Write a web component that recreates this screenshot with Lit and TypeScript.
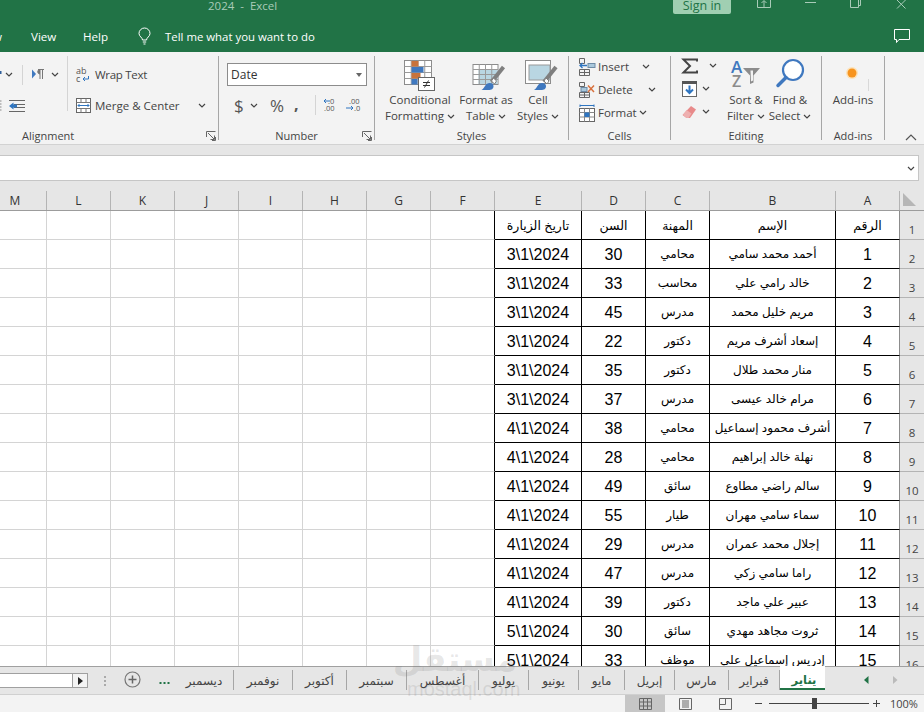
import {LitElement, html, css, svg} from 'lit';
import {customElement} from 'lit/decorators.js';

const COLS = ['M', 'L', 'K', 'J', 'I', 'H', 'G', 'F', 'E', 'D', 'C', 'B', 'A'];
const COL_WIDTHS = [47, 64, 64, 64, 64, 64, 64, 64, 87, 64, 64, 126, 64];

// each row: name, job, age, day
const PEOPLE: [string, string, number, number][] = [
    ['أحمد محمد سامي', 'محامي', 30, 3],
    ['خالد رامي علي', 'محاسب', 33, 3],
    ['مريم خليل محمد', 'مدرس', 45, 3],
    ['إسعاد أشرف مريم', 'دكتور', 22, 3],
    ['منار محمد طلال', 'دكتور', 35, 3],
    ['مرام خالد عيسى', 'مدرس', 37, 3],
    ['أشرف محمود إسماعيل', 'محامي', 38, 4],
    ['نهلة خالد إبراهيم', 'محامي', 28, 4],
    ['سالم راضي مطاوع', 'سائق', 49, 4],
    ['سماء سامي مهران', 'طيار', 55, 4],
    ['إجلال محمد عمران', 'مدرس', 29, 4],
    ['راما سامي زكي', 'مدرس', 47, 4],
    ['عبير علي ماجد', 'دكتور', 39, 4],
    ['ثروت مجاهد مهدي', 'سائق', 30, 5],
    ['إدريس إسماعيل علي', 'موظف', 33, 5],
];

const TABS: [string, number][] = [
    ['ديسمبر', 59],
    ['نوفمبر', 59],
    ['أكتوبر', 54],
    ['سبتمبر', 60],
    ['أغسطس', 72],
    ['يوليو', 50],
    ['يونيو', 50],
    ['مايو', 46],
    ['إبريل', 50],
    ['مارس', 54],
    ['فبراير', 51],
];

const caret = () => html`<svg class="caret" width="8" height="5" viewBox="0 0 8 5"><polyline points="1,1 4,4 7,1" fill="none" stroke="#444" stroke-width="1.2"/></svg>`;

const launcher = () => html`<svg width="10" height="10" viewBox="0 0 10 10"><path d="M.5 6V.5H9.5M2 2l6 6M8.5 4.5V8.5H4.5" fill="none" stroke="#666"/><path d="M9.5 6V9.5H6" fill="none" stroke="#666"/></svg>`;

// table grid outline used by the ribbon's big buttons
const gridLines = (x: number, y: number, w: number, h: number, cols: number, rows: number) => {
    const out = [];
    for (let i = 1; i < cols; i++) {
        const cx = x + (w * i) / cols;
        out.push(svg`<line x1=${cx} y1=${y} x2=${cx} y2=${y + h} stroke="#9a9a9a"/>`);
    }
    for (let i = 1; i < rows; i++) {
        const cy = y + (h * i) / rows;
        out.push(svg`<line x1=${x} y1=${cy} x2=${x + w} y2=${cy} stroke="#9a9a9a"/>`);
    }
    return out;
};

const brush = () => svg`
    <path d="M31 5L19 20" stroke="#7f7f7f" stroke-width="4"/>
    <path d="M21 16l3 3 -2 3 -3 -3z" fill="#fff" stroke="#7f7f7f"/>
    <path d="M9 28c2-1 3-4 5-6 3-2 7-1 7 2 0 3-2 4-5 4z" fill="#3f78bf"/>`;

@customElement('app-root')
export class AppRoot extends LitElement {
    static styles = css`
        :host {
            display: block;
            position: relative;
            width: 924px;
            height: 712px;
            overflow: hidden;
            font-family: "Open Sans", "DejaVu Sans", sans-serif;
            font-size: 11.5px;
            color: #444;
            background: #f3f3f3;
        }
        .page { display: flex; flex-direction: column; height: 712px; }
        svg { display: block; flex: none; overflow: visible; }

        /* green title area */
        .top { height: 52px; background: #217346; flex: none; }
        .titlebar { display: flex; height: 25px; color: #a9cbb8; line-height: 11px; }
        .title { margin-left: 208px; width: 465px; font-size: 11.5px; white-space: pre; }
        .signin {
            width: 58px; height: 14px; background: #a0cfb2; color: #217346;
            text-align: center; font-size: 12.5px; border-radius: 0 0 2px 2px; overflow: hidden;
        }
        .win-a { margin-left: 26px; }
        .win-b { margin-left: 34px; }
        .win-c { margin-left: 34px; }
        .win-d { margin-left: 35px; }
        .menubar {
            display: flex; align-items: center; height: 27px; padding-bottom: 4px; box-sizing: border-box;
            color: #fff; font-size: 11.6px;
        }
        .m-r { margin-left: -36px; width: 67px; }
        .m-view { width: 52px; }
        .m-help { width: 55px; }
        .m-tell { margin-left: 14px; flex: 1; font-size: 11.4px; }
        .m-comment { margin-right: 14px; }

        /* ribbon */
        .ribbon {
            display: flex; height: 93px; padding-top: 4px; box-sizing: border-box; flex: none;
            background: #f3f3f3; border-bottom: 1px solid #d2d2d2; position: relative;
        }
        .group {
            height: 84px; box-sizing: border-box; border-right: 1px solid #a6a6a6;
            display: flex; flex-direction: column;
        }
        .g-align { width: 219px; }
        .g-number { width: 156px; }
        .g-styles { width: 194px; }
        .g-cells { width: 102px; }
        .g-editing { width: 151px; }
        .g-addins { width: 63px; }
        .body { height: 72px; display: flex; }
        .glabel {
            height: 12px; line-height: 16px; text-align: center; position: relative;
            font-size: 11px; color: #444;
        }
        .glabel svg { position: absolute; right: 2px; top: 3px; }
        .g-align .glabel { text-align: left; padding-left: 22px; }
        .collapse { position: absolute; right: 7px; top: 82px; }

        .row { display: flex; align-items: center; height: 31px; white-space: nowrap; }
        .a-left { width: 68px; height: 55px; padding-top: 6px; border-right: 1px solid #d4d4d4; box-sizing: border-box; }
        .a-left .row { height: 25px; }
        .a-left .row + .row { margin-top: 6px; }
        .a-right { padding-top: 3px; }
        .a-right .row { padding-left: 8px; gap: 4px; }
        .wrap-txt { letter-spacing: -0.3px; }
        .vsep { width: 1px; height: 20px; background: #d4d4d4; }
        .a-sep { margin-left: 9px; margin-right: 9px; }
        .a-c2 { margin-left: 6px; }
        .a-merge { margin-left: 14px; }

        .n-col { padding: 7px 0 0 8px; }
        .combo {
            width: 140px; height: 23px; box-sizing: border-box; background: #fff;
            border: 1px solid #8c8c8c; display: flex; align-items: center; justify-content: space-between;
            padding: 0 4px 0 3px; color: #333; font-size: 12px;
        }
        .combo i { width: 0; height: 0; border: 3px solid transparent; border-top: 4px solid #666; border-bottom: 0; }
        .n-row { height: 38px; align-items: center; display: flex; padding-left: 7px; }
        .n-dollar { font-size: 17px; color: #555; width: 16px; }
        .n-pct { font-size: 17px; color: #555; margin-left: 12px; width: 24px; font-weight: 400; }
        .n-comma { font-size: 16px; font-weight: 700; color: #555; width: 17px; margin-top: -3px; }
        .n-sep { margin-left: 4px; margin-right: 7px; }
        .n-inc { margin-right: 8px; }

        .big {
            display: flex; flex-direction: column; align-items: center; text-align: center;
            line-height: 16px; white-space: nowrap; font-size: 11.5px;
        }
        .big .ico { height: 36px; display: flex; align-items: flex-end; }
        .big .cl { display: flex; align-items: center; gap: 3px; height: 16px; }
        .s-cf { width: 70px; margin-left: 10px; }
        .s-ft { width: 60px; margin-left: 1px; }
        .s-cs { width: 40px; margin-left: 2px; }

        .cells-col { padding: 0 0 0 10px; margin-top: -1px; }
        .cells-col .row { height: 23px; }
        .c-txt { margin-left: 3px; }
        .c-i { margin-left: 13px; }
        .c-d { margin-left: 15px; }
        .c-f { margin-left: 2px; }

        .ed-col { width: 55px; padding-left: 11px; box-sizing: border-box; margin-top: -2px; }
        .ed-col .row { height: 23px; }
        .ed-sum { margin-left: 11px; }
        .ed-fill { margin-left: 5px; }
        .ed-sort { width: 40px; }
        .ed-find { width: 44px; margin-left: 2px; }
        .add-dot { width: 100%; }

        /* formula bar */
        .formula { height: 36px; flex: none; box-sizing: border-box; background: #e6e6e6; padding-top: 10px; }
        .finput {
            height: 26px; box-sizing: border-box; width: 920px; margin-left: -1px; background: #fff;
            border: 1px solid #c6c6c6; display: flex; align-items: center; justify-content: flex-end; padding-right: 3px;
        }

        /* sheet */
        .sheet { flex: 1; min-height: 0; overflow: hidden; background: #fff; }
        table { border-collapse: separate; border-spacing: 0; table-layout: fixed; width: 924px; }
        th { height: 30px; padding: 0; background: #e6e6e6; border-bottom: 1px solid #9c9c9c; vertical-align: bottom; box-sizing: border-box; font-weight: 400; }
        .colname {
            height: 19px; line-height: 20px; border-right: 1px solid #b4b4b4; box-sizing: border-box;
            text-align: center; font-family: "Open Sans", sans-serif; font-size: 12px; color: #333;
        }
        .colname.cut { padding-right: 16px; }
        th svg { margin: 0 0 3px 3px; }
        td { height: 29px; padding: 0; box-sizing: border-box; border-right: 1px solid #d4d4d4; border-bottom: 1px solid #d4d4d4; text-align: center; white-space: nowrap; overflow: hidden; }
        td.edge { border-right-color: #000; }
        td.data { border-right-color: #000; border-bottom-color: #000; color: #000; font-family: "Liberation Sans", "DejaVu Sans", sans-serif; }
        td.last { border-right-color: #8c8c8c; }
        td.num { font-size: 16px; padding-top: 1px; }
        td.ar { font-size: 12px; }
        td.hd { font-size: 12.5px; }
        td.rh {
            background: #e6e6e6; border-right: 0; border-bottom-color: #b4b4b4; vertical-align: bottom;
            font-family: "Open Sans", sans-serif; font-size: 11.5px; color: #444; line-height: 14px; padding-bottom: 2px;
        }

        /* sheet tabs */
        .tabs {
            height: 29px; flex: none; box-sizing: border-box; background: #e6e6e6;
            border-top: 1px solid #a0a0a0; border-bottom: 1px solid #d0d0d0; display: flex; align-items: flex-start; position: relative;
        }
        .hscroll {
            width: 89px; height: 15px; margin-top: 6px; margin-left: -1px; box-sizing: border-box; flex: none;
            background: #fff; border: 1px solid #a0a0a0; display: flex; justify-content: flex-end;
        }
        .hscroll div { width: 14px; border-left: 1px solid #a0a0a0; background: #f3f3f3; display: flex; align-items: center; justify-content: center; }
        .hscroll i { width: 0; height: 0; border: 4px solid transparent; border-left: 5px solid #222; border-right: 0; }
        .grip { margin-left: 16px; margin-top: 9px; }
        .addsheet { margin-left: 17px; margin-top: 4px; }
        .dots { margin-left: 14px; margin-top: 15px; width: 20px; }
        .tab {
            height: 20px; margin-top: 3px; box-sizing: border-box; border-right: 1px solid #a6a6a6; flex: none;
            text-align: center; line-height: 22px; font-family: "DejaVu Sans", sans-serif; font-size: 12px; color: #444;
        }
        .tab.active {
            width: 45px; height: 24px; margin-top: -1px; background: #fff; border: 0; border-bottom: 2px solid #217346;
            color: #217346; font-weight: 700; line-height: 28px; font-size: 11.5px; padding-left: 3px;
        }
        .nav-a { margin-left: 39px; margin-top: 9px; }
        .nav-b { margin-left: 24px; margin-top: 9px; }

        /* status bar */
        .status { height: 17px; flex: none; background: #f3f3f3; display: flex; align-items: center; font-size: 11px; color: #444; }
        .vbtn { width: 40px; height: 17px; display: flex; align-items: center; justify-content: center; }
        .vbtn.on { background: #c6c6c6; margin-left: 625px; }
        .zoomer { margin-left: 10px; }
        .pct { margin-left: 9px; }

        .watermark {
            position: absolute; left: 407px; top: 642px; width: 110px; pointer-events: none;
            color: rgba(110, 110, 110, 0.17); font-family: "Liberation Sans", "DejaVu Sans", sans-serif; line-height: 1;
        }
        .wm-ar { font-size: 34px; font-weight: 700; white-space: nowrap; }
        .wm-en { font-size: 20px; margin-top: 3px; }
    `;

    private renderRow(n: number, cells: unknown[]) {
        const blanks = COLS.slice(0, 8).map((_, i) => html`<td class=${i === 7 ? 'edge' : ''}></td>`);
        return html`<tr>
            ${blanks}
            ${cells}
            <td class="rh">${n}</td>
        </tr>`;
    }

    private renderSheet() {
        const head = ['تاريخ الزيارة', 'السن', 'المهنة', 'الإسم', 'الرقم'];
        const headCells = head.map((t, i) => html`<td class="data hd ${i === 4 ? 'last' : ''}" dir="rtl">${t}</td>`);
        return html`<table>
            <colgroup>
                ${COL_WIDTHS.map(w => html`<col style="width:${w}px">`)}
                <col style="width:24px">
            </colgroup>
            <tr>
                ${COLS.map(c => html`<th><div class="colname ${c === 'M' ? 'cut' : ''}">${c}</div></th>`)}
                <th><svg width="14" height="14" viewBox="0 0 14 14"><path d="M0 0L13 13H0z" fill="#b6b6b6"/></svg></th>
            </tr>
            ${this.renderRow(1, headCells)}
            ${PEOPLE.map(([name, job, age, day], i) => this.renderRow(i + 2, [
                html`<td class="data num">${day}\\1\\2024</td>`,
                html`<td class="data num">${age}</td>`,
                html`<td class="data ar" dir="rtl">${job}</td>`,
                html`<td class="data ar" dir="rtl">${name}</td>`,
                html`<td class="data num last">${i + 1}</td>`,
            ]))}
        </table>`;
    }

    private renderTop() {
        const c = '#a9cbb8';
        return html`<div class="top">
            <div class="titlebar">
                <div class="title">2024  -  Excel</div>
                <div class="signin">Sign in</div>
                <svg class="win-a" width="14" height="8" viewBox="0 0 14 8"><path d="M.5 0V7.5H13.5V0M7 7V1M4.5 3L7 .5 9.5 3" fill="none" stroke=${c}/></svg>
                <svg class="win-b" width="11" height="8" viewBox="0 0 11 8"><line x1="0" y1="2.5" x2="11" y2="2.5" stroke=${c}/></svg>
                <svg class="win-c" width="11" height="8" viewBox="0 0 11 8"><path d="M.5 0V7.5H8.5V0M8.5 5.5H10.5V0" fill="none" stroke=${c}/></svg>
                <svg class="win-d" width="11" height="9" viewBox="0 0 11 9"><path d="M1 0L9.5 8.5M9.5 0L1 8.5" fill="none" stroke=${c}/></svg>
            </div>
            <div class="menubar">
                <div class="m-r">Review</div>
                <div class="m-view">View</div>
                <div class="m-help">Help</div>
                <svg width="13" height="17" viewBox="0 0 13 17"><path d="M4.5 12C4.5 9.5 1 8.5 1 5.5a5.5 5.5 0 0 1 11 0C12 8.5 8.5 9.5 8.5 12zM4.8 14H8.2M5.5 16H7.5" fill="none" stroke="#fff"/></svg>
                <div class="m-tell">Tell me what you want to do</div>
                <svg class="m-comment" width="16" height="15" viewBox="0 0 16 15"><path d="M.5 .5H15.5V10.5H5L2.5 13.5V10.5H.5z" fill="none" stroke="#fff"/></svg>
            </div>
        </div>`;
    }

    private renderAlignment() {
        return html`<div class="group g-align">
            <div class="body">
                <div class="a-left">
                    <div class="row">
                        <svg width="13" height="5" viewBox="0 0 13 5"><rect x="0" y="-1" width="1.5" height="3" fill="#2f5f9a"/><polyline points="6,1 9,4 12,1" fill="none" stroke="#444" stroke-width="1.2"/></svg>
                        <div class="vsep a-sep"></div>
                        <svg width="13" height="11" viewBox="0 0 13 11"><path d="M0 .5L4 5 0 9.5z" fill="#3f78bf"/><path d="M6 .5H12M8 .5V10M10.5 .5V10M8 5C5 5 5 .5 8 .5" fill="#777" stroke="#777"/></svg>
                        <span class="a-c2">${caret()}</span>
                    </div>
                    <div class="row">
                        <svg width="25" height="12" viewBox="0 0 25 12"><path d="M0 1H1.5M0 4H1.5M0 7H1.5M0 10H1.5" stroke="#888"/><path d="M9 .5H25M14 4.5H25M14 7.5H25M9 11.5H25" stroke="#666"/><path d="M9 6L13.5 2.5V4.5H17V7.5H13.5V9.5z" fill="#2f75c0"/></svg>
                    </div>
                </div>
                <div class="a-right">
                    <div class="row">
                        <svg width="15" height="16" viewBox="0 0 15 16"><text x="0" y="7" font-size="9" font-family="Open Sans" fill="#555">ab</text><text x="0" y="15" font-size="9" font-family="Open Sans" fill="#555">c</text><path d="M12.5 9V12H7M9 10L7 12 9 14" fill="none" stroke="#2f75c0"/></svg>
                        <span class="wrap-txt">Wrap Text</span>
                    </div>
                    <div class="row">
                        <svg width="15" height="15" viewBox="0 0 15 15"><rect x=".5" y=".5" width="14" height="14" fill="#fff" stroke="#666"/><path d="M.5 4.5H14.5M.5 10.5H14.5M5 .5V4.5M10 .5V4.5M5 10.5V14.5M10 10.5V14.5" stroke="#777"/><path d="M2 7.5H13M3.5 6L2 7.5 3.5 9M11.5 6L13 7.5 11.5 9" fill="none" stroke="#2f75c0"/></svg>
                        <span>Merge &amp; Center</span>
                        <span class="a-merge">${caret()}</span>
                    </div>
                </div>
            </div>
            <div class="glabel">Alignment${launcher()}</div>
        </div>`;
    }

    private renderNumber() {
        return html`<div class="group g-number">
            <div class="body">
                <div class="n-col">
                    <div class="combo">Date<i></i></div>
                    <div class="n-row">
                        <div class="n-dollar">$</div>
                        ${caret()}
                        <div class="n-pct">%</div>
                        <div class="n-comma">,</div>
                        <div class="vsep n-sep"></div>
                        <svg class="n-inc" width="15" height="14" viewBox="0 0 15 14"><text x="5" y="6" font-size="7.5" font-family="Open Sans" fill="#555">.0</text><text x="1" y="13" font-size="7.5" font-family="Open Sans" fill="#555">.00</text><path d="M7 3H1M3 1L1 3 3 5" fill="none" stroke="#2f75c0"/></svg>
                        <svg width="15" height="14" viewBox="0 0 15 14"><text x="3" y="6" font-size="7.5" font-family="Open Sans" fill="#555">.00</text><text x="8" y="13" font-size="7.5" font-family="Open Sans" fill="#555">.0</text><path d="M0 10H7M5 8L7 10 5 12" fill="none" stroke="#2f75c0"/></svg>
                    </div>
                </div>
            </div>
            <div class="glabel">Number${launcher()}</div>
        </div>`;
    }

    private renderStyles() {
        return html`<div class="group g-styles">
            <div class="body">
                <div class="big s-cf">
                    <div class="ico">
                        <svg width="32" height="32" viewBox="0 0 32 32">
                            <rect x=".5" y=".5" width="27" height="24" fill="#fff" stroke="#8c8c8c"/>
                            ${gridLines(0.5, 0.5, 27, 24, 4, 4)}
                            <rect x="7.5" y="1" width="7" height="5.5" fill="#c8733c"/>
                            <rect x="7.5" y="7" width="12" height="5.5" fill="#3f78bf"/>
                            <rect x="7.5" y="13" width="9" height="5.5" fill="#c8733c"/>
                            <rect x="7.5" y="19" width="6" height="5.5" fill="#3f78bf"/>
                            <rect x="14.5" y="17.5" width="16" height="13" fill="#fff" stroke="#666"/>
                            <path d="M19 22.5H26M19 25.5H26M24.5 20.5L20.5 27.5" stroke="#333" fill="none"/>
                        </svg>
                    </div>
                    <div>Conditional</div>
                    <div class="cl">Formatting ${caret()}</div>
                </div>
                <div class="big s-ft">
                    <div class="ico">
                        <svg width="32" height="30" viewBox="0 0 32 30">
                            <g transform="translate(2.5 0)">
                                <rect x=".5" y="2.5" width="25" height="20" fill="#fff" stroke="#8c8c8c"/>
                                <rect x="6" y="7" width="19" height="15" fill="#b9d6e2"/>
                                ${gridLines(0.5, 2.5, 25, 20, 4, 4)}
                                ${brush()}
                            </g>
                        </svg>
                    </div>
                    <div>Format as</div>
                    <div class="cl">Table ${caret()}</div>
                </div>
                <div class="big s-cs">
                    <div class="ico">
                        <svg width="32" height="32" viewBox="0 0 32 32">
                            <g transform="translate(3 0)">
                                <rect x=".5" y=".5" width="25" height="23" fill="#fff" stroke="#8c8c8c"/>
                                <rect x="4" y="5" width="21" height="15" fill="#b9d6e2" stroke="#9a9a9a"/>
                                <g transform="translate(0 2)">${brush()}</g>
                            </g>
                        </svg>
                    </div>
                    <div>Cell</div>
                    <div class="cl">Styles ${caret()}</div>
                </div>
            </div>
            <div class="glabel">Styles</div>
        </div>`;
    }

    private renderCells() {
        return html`<div class="group g-cells">
            <div class="body">
                <div class="cells-col">
                    <div class="row">
                        <svg width="16" height="18" viewBox="0 0 16 18"><path d="M.5 .5H5.5V5.5H.5zM.5 11.5H10.5V17.5H.5zM5.5 11.5V17.5M.5 14.5H10.5" fill="none" stroke="#666"/><rect x="9" y="5.5" width="7" height="4" fill="#a9c8dc" stroke="#6d8ba5"/><path d="M8 7.5H1M3.5 5L1 7.5 3.5 10" fill="none" stroke="#2f75c0" stroke-width="1.3"/></svg>
                        <span class="c-txt">Insert</span><span class="c-i">${caret()}</span>
                    </div>
                    <div class="row">
                        <svg width="16" height="16" viewBox="0 0 16 16"><path d="M.5 .5H5.5V4.5H.5zM.5 10.5H10.5V15.5H.5zM5.5 10.5V15.5M.5 13H10.5" fill="none" stroke="#666"/><rect x="2" y="5.5" width="6" height="4" fill="#a9c8dc" stroke="#6d8ba5"/><path d="M9 3.5L15 10M15 3.5L9 10" stroke="#d8703c" stroke-width="1.5"/></svg>
                        <span class="c-txt">Delete</span><span class="c-d">${caret()}</span>
                    </div>
                    <div class="row">
                        <svg width="16" height="18" viewBox="0 0 16 18"><path d="M1 1.5H15M1 .5V3M15 .5V3" stroke="#2f75c0" fill="none"/><rect x=".5" y="4.5" width="15" height="13" fill="#fff" stroke="#666"/><path d="M.5 8.5H15.5M.5 13H15.5M5.5 4.5V17.5M10.5 4.5V17.5" stroke="#888"/><rect x="5.5" y="8.5" width="5" height="4.5" fill="#2f75c0"/></svg>
                        <span class="c-txt">Format</span><span class="c-f">${caret()}</span>
                    </div>
                </div>
            </div>
            <div class="glabel">Cells</div>
        </div>`;
    }

    private renderEditing() {
        return html`<div class="group g-editing">
            <div class="body">
                <div class="ed-col">
                    <div class="row">
                        <svg width="16" height="16" viewBox="0 0 16 16"><path d="M15 3.5V1.5H1.5L8 8 1.5 14.5H15V12.5" fill="none" stroke="#444" stroke-width="2"/></svg>
                        <span class="ed-sum">${caret()}</span>
                    </div>
                    <div class="row">
                        <svg width="15" height="16" viewBox="0 0 15 16"><rect x=".5" y=".5" width="14" height="15" fill="#fff" stroke="#666"/><rect x="0" y="0" width="15" height="3" fill="#555"/><path d="M7.5 4.5V12M4 8.5L7.5 12 11 8.5" fill="none" stroke="#2f75c0" stroke-width="2"/></svg>
                        <span class="ed-fill">${caret()}</span>
                    </div>
                    <div class="row">
                        <svg width="15" height="14" viewBox="0 0 15 14"><path d="M9 1l5 3.5 -6 8.5h-3.5l-4-3z" fill="#e88a8a"/><path d="M1 10l3.5-5 5 3.5 -3 4.5h-2z" fill="#eeb0b0"/></svg>
                        <span class="ed-fill">${caret()}</span>
                    </div>
                </div>
                <div class="big ed-sort">
                    <div class="ico">
                        <svg width="30" height="32" viewBox="0 0 30 32"><text x="0" y="13" font-size="17" font-weight="600" font-family="Open Sans" fill="#3f78bf">A</text><text x="1" y="27" font-size="16" font-weight="600" font-family="Open Sans" fill="#8c8c8c">Z</text><path d="M12 8H29L22.5 15.5V22.5L19 24V15.5z" fill="#8c8c8c"/><path d="M19.5 10.5H22V20.5L20 21.5z" fill="#f3f3f3"/></svg>
                    </div>
                    <div>Sort &amp;</div>
                    <div class="cl">Filter ${caret()}</div>
                </div>
                <div class="big ed-find">
                    <div class="ico">
                        <svg width="30" height="32" viewBox="0 0 30 32"><circle cx="18" cy="10" r="10" fill="#fff" stroke="#3f78bf" stroke-width="2.2"/><path d="M11 17.5L3 25.5" stroke="#3f78bf" stroke-width="3.5" stroke-linecap="round"/></svg>
                    </div>
                    <div>Find &amp;</div>
                    <div class="cl">Select ${caret()}</div>
                </div>
            </div>
            <div class="glabel">Editing</div>
        </div>`;
    }

    private renderAddins() {
        return html`<div class="group g-addins">
            <div class="body">
                <div class="big add-dot">
                    <div class="ico">
                        <svg width="36" height="24" viewBox="0 0 36 24"><circle cx="17" cy="5" r="6" fill="#fde2b8"/><circle cx="17" cy="5" r="4.5" fill="#f7941e"/><line x1="33.5" y1="11" x2="33.5" y2="23" stroke="#d8d8d8"/></svg>
                    </div>
                    <div>Add-ins</div>
                </div>
            </div>
            <div class="glabel">Add-ins</div>
        </div>`;
    }

    private renderTabs() {
        return html`<div class="tabs">
            <div class="hscroll"><div><i></i></div></div>
            <svg class="grip" width="3" height="10" viewBox="0 0 3 10"><path d="M0 0h2v2H0zM0 4h2v2H0zM0 8h2v2H0z" fill="#aaa"/></svg>
            <svg class="addsheet" width="17" height="17" viewBox="0 0 17 17"><circle cx="8.5" cy="8.5" r="7.5" fill="none" stroke="#777" stroke-width="1.2"/><path d="M8.5 4.5V12.5M4.5 8.5H12.5" stroke="#666" stroke-width="1.5"/></svg>
            <svg class="dots" width="11" height="2" viewBox="0 0 11 2"><path d="M0 0h2v2H0zM4 0h2v2H4zM8 0h2v2H8z" fill="#217346"/></svg>
            ${TABS.map(([t, w]) => html`<div class="tab" dir="rtl" style="width:${w}px">${t}</div>`)}
            <div class="tab active" dir="rtl">يناير</div>
            <svg class="nav-a" width="5" height="8" viewBox="0 0 5 8"><path d="M4.5 0V8L0 4z" fill="#217346"/></svg>
            <svg class="nav-b" width="5" height="8" viewBox="0 0 5 8"><path d="M0 0V8L4.5 4z" fill="#bbb"/></svg>
        </div>`;
    }

    private renderStatus() {
        return html`<div class="status">
            <div class="vbtn on">
                <svg width="13" height="12" viewBox="0 0 13 12"><path d="M.5 .5H12.5V11.5H.5zM.5 4H12.5M.5 8H12.5M4.5 .5V11.5M8.5 .5V11.5" fill="none" stroke="#666"/></svg>
            </div>
            <div class="vbtn">
                <svg width="13" height="12" viewBox="0 0 13 12"><path d="M.5 .5H12.5V11.5H.5z" fill="none" stroke="#666"/><path d="M3 3H10M3 5H10M3 7H10M3 9H10" stroke="#666"/></svg>
            </div>
            <div class="vbtn">
                <svg width="13" height="12" viewBox="0 0 13 12"><path d="M.5 .5H12.5V11.5H.5zM.5 6.5H6.5V.5" fill="none" stroke="#666"/></svg>
            </div>
            <svg class="zoomer" width="126" height="13" viewBox="0 0 126 13">
                <path d="M0 6.5H7M14 6.5H114M118 6.5H125M121.5 3V10" stroke="#444" fill="none"/>
                <rect x="57" y="1" width="5" height="11" fill="#444"/>
            </svg>
            <div class="pct">100%</div>
        </div>`;
    }

    render() {
        return html`<div class="page">
            ${this.renderTop()}
            <div class="ribbon">
                ${this.renderAlignment()}
                ${this.renderNumber()}
                ${this.renderStyles()}
                ${this.renderCells()}
                ${this.renderEditing()}
                ${this.renderAddins()}
                <svg class="collapse" width="12" height="7" viewBox="0 0 12 7"><polyline points="1,6 6,1 11,6" fill="none" stroke="#555" stroke-width="1.2"/></svg>
            </div>
            <div class="formula">
                <div class="finput">${caret()}</div>
            </div>
            <div class="sheet">${this.renderSheet()}</div>
            ${this.renderTabs()}
            ${this.renderStatus()}
        </div>
        <div class="watermark"><div class="wm-ar" dir="rtl">مستقل</div><div class="wm-en">mostaql.com</div></div>`;
    }
}
